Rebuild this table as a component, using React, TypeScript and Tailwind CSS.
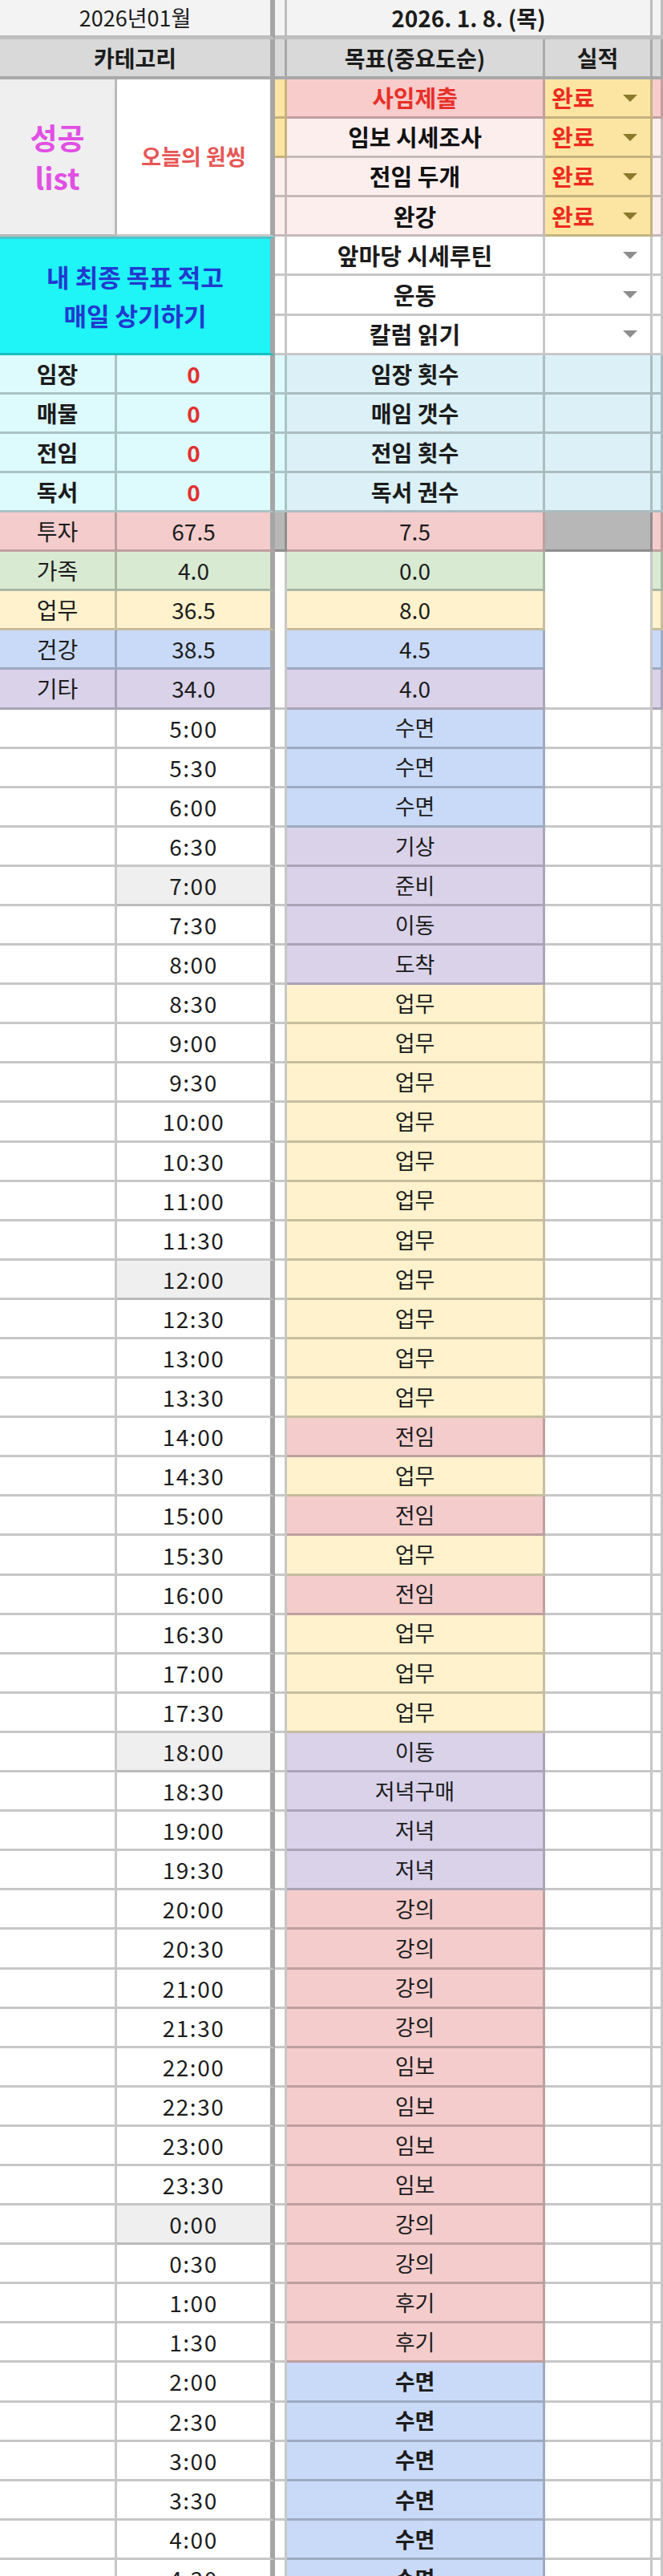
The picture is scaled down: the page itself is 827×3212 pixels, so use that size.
import React from "react";

type Cat = "blue" | "purple" | "yellow" | "pink";

const catBg: Record<Cat, string> = {
  blue: "bg-[#c9daf8]",
  purple: "bg-[#d9d2e9]",
  yellow: "bg-[#fff2cc]",
  pink: "bg-[#f4cccc]",
};

// [time, 할일, category, bold]
const schedule: [string, string, Cat, boolean][] = [
  ["5:00", "수면", "blue", false],
  ["5:30", "수면", "blue", false],
  ["6:00", "수면", "blue", false],
  ["6:30", "기상", "purple", false],
  ["7:00", "준비", "purple", false],
  ["7:30", "이동", "purple", false],
  ["8:00", "도착", "purple", false],
  ["8:30", "업무", "yellow", false],
  ["9:00", "업무", "yellow", false],
  ["9:30", "업무", "yellow", false],
  ["10:00", "업무", "yellow", false],
  ["10:30", "업무", "yellow", false],
  ["11:00", "업무", "yellow", false],
  ["11:30", "업무", "yellow", false],
  ["12:00", "업무", "yellow", false],
  ["12:30", "업무", "yellow", false],
  ["13:00", "업무", "yellow", false],
  ["13:30", "업무", "yellow", false],
  ["14:00", "전임", "pink", false],
  ["14:30", "업무", "yellow", false],
  ["15:00", "전임", "pink", false],
  ["15:30", "업무", "yellow", false],
  ["16:00", "전임", "pink", false],
  ["16:30", "업무", "yellow", false],
  ["17:00", "업무", "yellow", false],
  ["17:30", "업무", "yellow", false],
  ["18:00", "이동", "purple", false],
  ["18:30", "저녁구매", "purple", false],
  ["19:00", "저녁", "purple", false],
  ["19:30", "저녁", "purple", false],
  ["20:00", "강의", "pink", false],
  ["20:30", "강의", "pink", false],
  ["21:00", "강의", "pink", false],
  ["21:30", "강의", "pink", false],
  ["22:00", "임보", "pink", false],
  ["22:30", "임보", "pink", false],
  ["23:00", "임보", "pink", false],
  ["23:30", "임보", "pink", false],
  ["0:00", "강의", "pink", false],
  ["0:30", "강의", "pink", false],
  ["1:00", "후기", "pink", false],
  ["1:30", "후기", "pink", false],
  ["2:00", "수면", "blue", true],
  ["2:30", "수면", "blue", true],
  ["3:00", "수면", "blue", true],
  ["3:30", "수면", "blue", true],
  ["4:00", "수면", "blue", true],
  ["4:30", "수면", "blue", true],
];

const grayTimes = ["7:00", "12:00", "18:00", "0:00"];

const goals = [
  { text: "사임제출", bg: "bg-[#f8cccb]", color: "text-[#e8302a]", n: "bg-[#fde4a2]" },
  { text: "임보 시세조사", bg: "bg-[#fdeeee]", color: "text-[#111]", n: "bg-[#fde4a2]" },
  { text: "전임 두개", bg: "bg-[#fdeeee]", color: "text-[#111]", n: "bg-[#fdeeee]" },
  { text: "완강", bg: "bg-[#fdeeee]", color: "text-[#111]", n: "bg-[#fdeeee]" },
];

const counts = [
  ["임장", "임장 횟수"],
  ["매물", "매임 갯수"],
  ["전임", "전임 횟수"],
  ["독서", "독서 권수"],
];

const cats: [string, string, string, Cat | "green"][] = [
  ["투자", "67.5", "7.5", "pink"],
  ["가족", "4.0", "0.0", "green"],
  ["업무", "36.5", "8.0", "yellow"],
  ["건강", "38.5", "4.5", "blue"],
  ["기타", "34.0", "4.0", "purple"],
];

const allBg: Record<string, string> = { ...catBg, green: "bg-[#d9ead3]" };

const box = "flex items-center border-b-[3px] border-r-[3px] border-black/[0.22]";
const cell = box + " justify-center";
const sep = "border-r-[6px] border-r-[#a5a5a5]";

function Tri({ color }: { color: string }) {
  return (
    <svg width="18" height="9" viewBox="0 0 18 9" className="shrink-0">
      <polygon points="0,0 18,0 9,9" fill={color} />
    </svg>
  );
}

export default function App() {
  return (
    <div className="w-[827px] overflow-hidden bg-white font-['Noto_Sans_CJK_KR','Noto_Sans',sans-serif] text-[#1c1c1c]">
      {/* 상단 */}
      <div className="grid grid-cols-[146px_197px_15px_322px_134px_13px] grid-rows-[49px_50px_repeat(16,49.1px)]">
        {/* row 1 */}
        <div className={`${cell} ${sep} col-span-2 border-b-[5px] bg-[#f3f3f3] text-[27px]`}>2026년01월</div>
        <div className={`${cell} border-b-[5px] bg-[#f3f3f3]`} />
        <div className={`${cell} col-span-2 border-b-[5px] bg-[#f3f3f3] text-[28px] font-bold`}>2026. 1. 8. (목)</div>
        <div className={`${cell} border-b-[5px] bg-[#f3f3f3]`} />

        {/* row 2 */}
        <div className={`${cell} ${sep} col-span-2 border-b-[4px] bg-[#d9d9d9] text-[28px] font-bold`}>카테고리</div>
        <div className={`${cell} border-b-[4px] bg-[#d9d9d9]`} />
        <div className={`${cell} border-b-[4px] bg-[#d9d9d9] text-[28px] font-bold`}>목표(중요도순)</div>
        <div className={`${cell} border-b-[4px] bg-[#d9d9d9] text-[28px] font-bold`}>실적</div>
        <div className={`${cell} border-b-[4px] bg-[#d9d9d9]`} />

        {/* 목표 */}
        <div className={`${cell} row-span-4 col-start-1 row-start-3 flex-col bg-[#efefef] text-[37px] font-bold leading-[50px] text-[#e14fe3]`}>
          <span>성공</span>
          <span>list</span>
        </div>
        <div className={`${cell} ${sep} row-span-4 col-start-2 row-start-3 bg-white text-[27px] font-bold text-[#e65656]`}>
          오늘의 원씽
        </div>
        {goals.map((g, i) => (
          <React.Fragment key={g.text}>
            <div className={`${cell} col-start-3 ${g.n}`} style={{ gridRowStart: 3 + i }} />
            <div className={`${cell} ${g.bg} ${g.color} text-[29px] font-bold`} style={{ gridRowStart: 3 + i }}>
              {g.text}
            </div>
            <div
              className={`${box} justify-between bg-[#fce5a3] pl-2 pr-4 text-[29px] font-bold text-[#ee2a1f]`}
              style={{ gridRowStart: 3 + i }}
            >
              <span>완료</span>
              <Tri color="#8b7a2b" />
            </div>
            <div className={`${cell} ${g.bg}`} style={{ gridRowStart: 3 + i }} />
          </React.Fragment>
        ))}

        {/* 최종 목표 */}
        <div
          className={`${cell} ${sep} col-span-2 row-span-3 col-start-1 row-start-7 flex-col border-t-[3px] border-t-[#49c6cf] bg-[#1ff4f6] text-[31px] font-bold leading-[48px] text-[#2139cf]`}
        >
          <span>내 최종 목표 적고</span>
          <span>매일 상기하기</span>
        </div>
        {["앞마당 시세루틴", "운동", "칼럼 읽기"].map((t, i) => (
          <React.Fragment key={t}>
            <div className={`${cell} col-start-3 bg-white`} style={{ gridRowStart: 7 + i }} />
            <div className={`${cell} bg-white text-[29px] font-bold`} style={{ gridRowStart: 7 + i }}>
              {t}
            </div>
            <div className={`${box} justify-end bg-white pr-4`} style={{ gridRowStart: 7 + i }}>
              <Tri color="#8d8d8d" />
            </div>
            <div className={`${cell} bg-white`} style={{ gridRowStart: 7 + i }} />
          </React.Fragment>
        ))}

        {/* 횟수 */}
        {counts.map(([a, c]) => (
          <React.Fragment key={a}>
            <div className={`${cell} bg-[#ddfafd] text-[28px] font-bold`}>{a}</div>
            <div className={`${cell} ${sep} bg-[#ddfafd] text-[28px] font-bold text-[#e23030]`}>0</div>
            <div className={`${cell} bg-[#ddfafd]`} />
            <div className={`${cell} bg-[#dbf1f7] text-[28px] font-bold`}>{c}</div>
            <div className={`${cell} bg-[#dbf1f7]`} />
            <div className={`${cell} bg-[#dbf1f7]`} />
          </React.Fragment>
        ))}

        {/* 카테고리 합계 */}
        {cats.map(([a, b, c, k], i) => (
          <React.Fragment key={a}>
            <div className={`${cell} col-start-1 ${allBg[k]} text-[28px]`} style={{ gridRowStart: 14 + i }}>
              {a}
            </div>
            <div className={`${cell} ${sep} ${allBg[k]} text-[28px]`} style={{ gridRowStart: 14 + i }}>
              {b}
            </div>
            {i === 0 && <div className={`${cell} col-start-3 row-start-14 bg-[#b7b7b7]`} />}
            <div className={`${cell} col-start-4 ${allBg[k]} text-[28px]`} style={{ gridRowStart: 14 + i }}>
              {c}
            </div>
            {i === 0 && <div className={`${cell} col-start-5 row-start-14 bg-[#b7b7b7]`} />}
            <div className={`${cell} col-start-6 ${allBg[k]}`} style={{ gridRowStart: 14 + i }} />
          </React.Fragment>
        ))}
        <div className={`${cell} col-start-3 row-span-4 row-start-15 bg-white`} />
        <div className={`${cell} col-start-5 row-span-4 row-start-15 bg-white`} />
      </div>

      {/* 시간표 */}
      <div className="grid grid-cols-[146px_197px_15px_322px_134px_13px] auto-rows-[49.1px]">
        {schedule.map(([t, s, k, bold]) => (
          <React.Fragment key={t}>
            <div className={`${cell} bg-white`} />
            <div
              className={`${cell} ${sep} ${grayTimes.includes(t) ? "bg-[#efefef]" : "bg-white"} text-[28px] tracking-[1.5px]`}
            >
              {t}
            </div>
            <div className={`${cell} bg-white`} />
            <div className={`${cell} ${catBg[k]} text-[27px] ${bold ? "font-bold" : "font-normal"}`}>{s}</div>
            <div className={`${cell} bg-white`} />
            <div className={`${cell} bg-white`} />
          </React.Fragment>
        ))}
      </div>
    </div>
  );
}
